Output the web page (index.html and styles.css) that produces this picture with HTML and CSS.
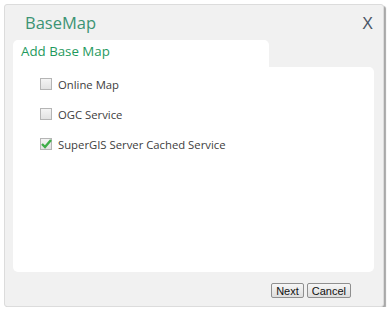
FILE: index.html
```html
<!DOCTYPE html>
<html lang="en">
<head>
  <meta charset="UTF-8" />
  <title>BaseMap</title>
  <link rel="stylesheet" href="styles.css">
</head>
<body>
  <div class="dialog">
    <div class="dialog-head">
      <span class="dialog-title">BaseMap</span>
      <span class="dialog-close">X</span>
    </div>

    <div class="tab">Add Base Map</div>
    <div class="panel">
      <label class="option"><span class="box"></span>Online Map</label>
      <label class="option"><span class="box"></span>OGC Service</label>
      <label class="option"><span class="box checked">
        <svg width="13" height="13" viewBox="0 0 13 13"><path d="M2 7 L5 10 L11 3" fill="none" stroke="#3fae49" stroke-width="2.4"/></svg>
      </span>SuperGIS Server Cached Service</label>
    </div>

    <div class="dialog-foot">
      <button class="btn">Next</button>
      <button class="btn">Cancel</button>
    </div>
  </div>
</body>
</html>
```

FILE: styles.css
```css
* { box-sizing: border-box; }
body {
  margin: 0;
  background: white;
  font-family: 'Open Sans', sans-serif;
}

.dialog {
  margin: 4px 0 0 4px;
  width: 380px;
  height: 303px;
  background: #f1f1f1;
  border: 1px solid #dcdcdc;
  border-radius: 3px;
  box-shadow: 2px 2px 1px #a8a8a8;
  padding: 0 9px 0 8px;
}

.dialog-head {
  display: flex;
  justify-content: space-between;
  align-items: center;
  height: 35px;
  padding: 0 1px 0 12px;
}

.dialog-title {
  font-size: 16.5px;
  color: #3c9474;
}

.dialog-close {
  font-family: 'Liberation Sans', sans-serif;
  font-size: 16px;
  color: #4a5566;
  margin-top: 2px;
}

.tab {
  width: 256px;
  height: 27px;
  background: white;
  border-radius: 5px 5px 0 0;
  padding: 2px 0 0 8px;
  font-size: 13.3px;
  color: #1f9a5e;
}

.panel {
  background: white;
  height: 205px;
  border-radius: 0 5px 5px 5px;
  padding: 2px 0 0 27px;
}

.option {
  display: flex;
  align-items: center;
  height: 30px;
  font-size: 11.3px;
  color: #404040;
}

.box {
  width: 12px;
  height: 12px;
  border: 1px solid #b5b5b5;
  background: linear-gradient(#f4f4f4, #e2e2e2);
  margin-right: 6px;
  position: relative;
}

.box svg {
  position: absolute;
  left: -1px;
  top: -2px;
}

.dialog-foot {
  display: flex;
  justify-content: flex-end;
  gap: 3px;
  padding: 11px 23px 0 0;
}

.btn {
  font-family: 'Liberation Sans', sans-serif;
  font-size: 11px;
  color: #111;
  background: linear-gradient(#f6f6f6, #dedede);
  border: 1px solid #8f8f8f;
  border-radius: 2px;
  height: 15px;
  padding: 0 4px;
  line-height: 12px;
}
```
